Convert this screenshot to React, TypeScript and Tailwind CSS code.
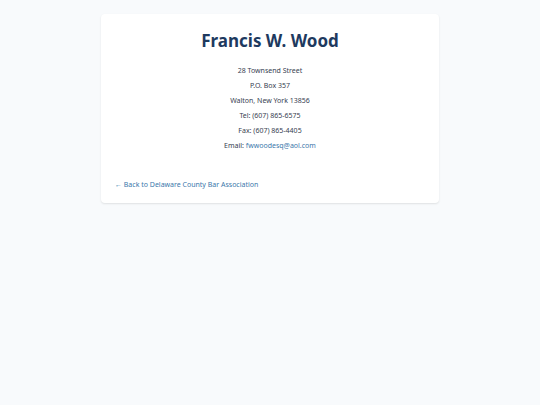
const contactLines = [
  "28 Townsend Street",
  "P.O. Box 357",
  "Walton, New York 13856",
  "Tel: (607) 865-6575",
  "Fax: (607) 865-4405",
];

const App = () => {
  return (
    <div className="min-h-screen bg-[#f8fafc] px-4 pt-[14px] font-['Noto_Sans',sans-serif] text-[#374151]">
      <main className="mx-auto max-w-[338px] rounded bg-white px-[14px] pt-[14px] pb-3 shadow-[0_1px_2px_rgba(0,0,0,0.1)]">
        {/* Attorney details */}
        <div className="text-center">
          <h1 className="text-[17px] leading-[26px] font-bold text-[#1e3a5f]">
            Francis W. Wood
          </h1>
          <address className="mt-[9px] text-[7px] leading-[15px] not-italic">
            {contactLines.map((line) => (
              <p key={line}>{line}</p>
            ))}
            <p>
              Email:{" "}
              <a href="mailto:fwwoodesq@aol.com" className="text-[#3b78ab]">
                fwwoodesq@aol.com
              </a>
            </p>
          </address>
        </div>

        {/* Back link */}
        <a
          href="/"
          className="mt-[26px] block w-fit text-[7px] leading-[12px] text-[#3b78ab]"
        >
          ← Back to Delaware County Bar Association
        </a>
      </main>
    </div>
  );
};

export default App;
